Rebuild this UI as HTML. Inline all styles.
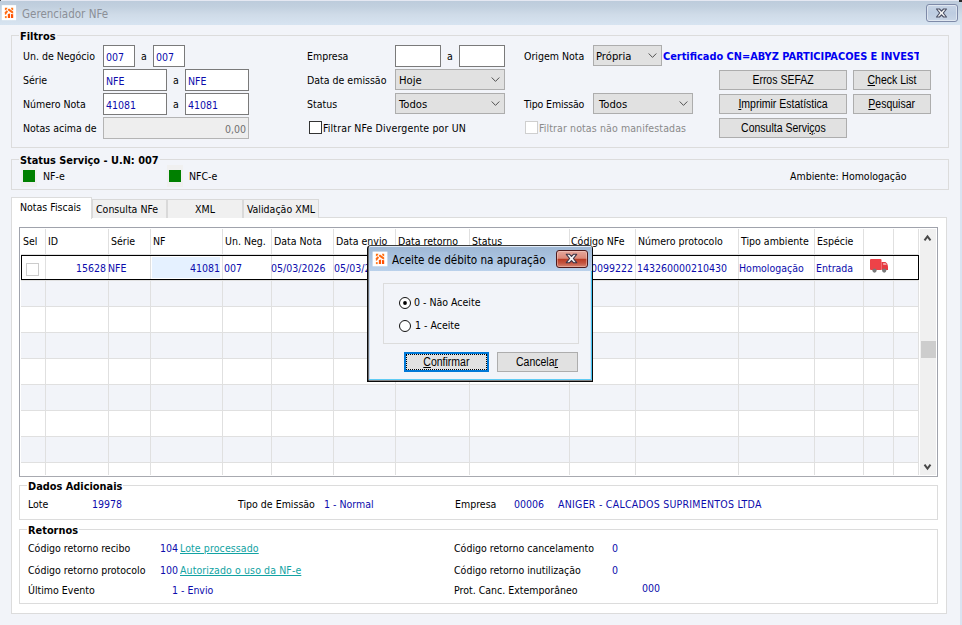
<!DOCTYPE html>
<html lang="pt-BR">
<head>
<meta charset="utf-8">
<title>Gerenciador NFe</title>
<style>
*{box-sizing:border-box;margin:0;padding:0}
html,body{width:962px;height:625px;overflow:hidden}
body{position:relative;background:#f2f4f9;font-family:"DejaVu Sans Condensed","Liberation Sans",sans-serif;font-size:10.5px;color:#000;line-height:13px}
.a{position:absolute;white-space:nowrap}
.t{position:absolute;white-space:nowrap;height:13px;line-height:13px;margin-top:1px}
.bl{color:#0c0cac}
.b{font-weight:bold;font-size:10.9px}
.titlebar{left:0;top:0;width:962px;height:25px;background:linear-gradient(#bccbdb 0,#c2d0df 28%,#cfdbe8 58%,#d7e4f1 100%)}
.ttl{font-family:"DejaVu Sans Condensed","Liberation Sans",sans-serif;font-size:11.5px;height:16px;line-height:16px}
.fs{border:1px solid #dcdcdc}
.lg{background:#f2f4f9;padding:0 1px;height:13px;line-height:13px}
.inp{background:#fff;border:1px solid #7a7a7a;height:22px;line-height:22px;padding-left:2px;color:#0c0cac}
.cmb{background:#e1e1e1;border:1px solid #adadad;height:21px;line-height:20px;padding-left:3px;padding-top:1px;font-size:11.2px}
.cmb svg{position:absolute;right:4px;top:7px}
.btn{background:#e1e1e1;border:1px solid #adadad;height:20px;line-height:18px;text-align:center;font-family:"Liberation Sans",sans-serif;font-size:12px}
.btn span{display:inline-block;transform:scaleX(.875);transform-origin:50% 50%}
.btn u{text-decoration:underline;text-underline-offset:1px}
.cb{width:13px;height:13px;background:#fff;border:1px solid #333}
.tab{background:#f0f0f0;border:1px solid #d9d9d9;border-bottom:none;height:19px;line-height:19px;text-align:center;top:199px}
.hl{background:#e0e0e0;height:1px}
.vl{background:#e0e0e0;width:1px}
.row{left:21px;width:898px;height:26px}
.g{background:#f2f4f9}
</style>
</head>
<body>

<!-- ===== main window title bar ===== -->
<div class="a titlebar"></div>
<div class="a" style="left:0;top:0;width:962px;height:1px;background:#e5e8f2"></div>
<div class="a" style="left:0;top:0;width:1px;height:1px;background:#4a4a4a"></div>
<div class="a" style="left:959px;top:0;width:3px;height:2px;background:#2a2a2a"></div>
<div class="a" style="left:960px;top:25px;width:2px;height:600px;background:#d9e4f1"></div>
<svg class="a" style="left:1px;top:5px" width="17" height="17" viewBox="0 0 17 17">
  <rect x="0.8" y="0.15" width="14.3" height="15.05" fill="#fff"/>
  <g transform="translate(3.9 2.8)" fill="#ff6a12">
    <path d="M0 0 L2.6 0 L2 1.5 L0 2.6 Z" fill="#ff7418"/>
    <path d="M5.9 0 L8.3 0 L8.3 2.6 L6.6 1.5 Z" fill="#ff7418"/>
    <path d="M2.9 1.7 L4.1 .6 L8.3 3.6 L8.3 5.6 L7.1 5.4 L2.9 2.4 Z"/>
    <path d="M1.6 2.5 L3.2 3.6 L1.1 6.8 L0 7 L0 4.4 Z"/>
    <path d="M2.95 6.1 L5.2 5.6 L5.2 10.1 L2.95 10.1 Z" fill="#ff5808"/>
    <path d="M6.1 6.1 L8.3 6.5 L8.3 10.1 L6.1 10.1 Z" fill="#ff5206"/>
    <path d="M0 8.3 L1.8 8.3 L1.8 10.3 L0 10.3 Z" fill="#ff7a20"/>
  </g>
</svg>
<div class="t ttl" style="left:22px;top:5px;color:#8b8f97">Gerenciador NFe</div>
<div class="a" style="left:926px;top:4px;width:32px;height:18px;border:1px solid #7e8aa8;border-radius:3px;background:linear-gradient(#c7d4e5,#bdcce0 50%,#c9d6e6);box-shadow:inset 0 0 0 1px rgba(255,255,255,.45)"></div>
<svg class="a" style="left:935px;top:8px" width="13" height="10" viewBox="0 0 13 10">
  <path d="M1.5 1 L4.5 1 L6.5 3.2 L8.5 1 L11.5 1 L8.3 5 L11.5 9 L8.5 9 L6.5 6.8 L4.5 9 L1.5 9 L4.7 5 Z" fill="#f6f6f6" stroke="#4a4f64" stroke-width="1.15" stroke-linejoin="round"/>
</svg>

<!-- ===== Filtros ===== -->
<div class="a fs" style="left:11px;top:35px;width:938px;height:113px"></div>
<div class="t b lg" style="left:19px;top:29px">Filtros</div>

<div class="t" style="left:23px;top:49px">Un. de Negócio</div>
<div class="a inp" style="left:103px;top:45px;width:32px">007</div>
<div class="t" style="left:141px;top:49px">a</div>
<div class="a inp" style="left:153px;top:45px;width:32px">007</div>

<div class="t" style="left:23px;top:73px">Série</div>
<div class="a inp" style="left:103px;top:69px;width:64px">NFE</div>
<div class="t" style="left:173px;top:73px">a</div>
<div class="a inp" style="left:185px;top:69px;width:64px">NFE</div>

<div class="t" style="left:23px;top:97px">Número Nota</div>
<div class="a inp" style="left:103px;top:93px;width:64px">41081</div>
<div class="t" style="left:173px;top:97px">a</div>
<div class="a inp" style="left:185px;top:93px;width:64px">41081</div>

<div class="t" style="left:23px;top:121px">Notas acima de</div>
<div class="a inp" style="left:103px;top:117px;width:146px;background:#eeeeee;border-color:#b4b4b4;color:#707070;text-align:right;padding-right:2px">0,00</div>

<div class="t" style="left:307px;top:49px">Empresa</div>
<div class="a inp" style="left:395px;top:45px;width:46px"></div>
<div class="t" style="left:447px;top:49px">a</div>
<div class="a inp" style="left:459px;top:45px;width:46px"></div>

<div class="t" style="left:307px;top:73px">Data de emissão</div>
<div class="a cmb" style="left:395px;top:69px;width:110px">Hoje<svg width="9" height="6" viewBox="0 0 9 6"><path d="M.7 .5 4.5 4.4 8.3 .5" fill="none" stroke="#505050" stroke-width="1"/></svg></div>

<div class="t" style="left:307px;top:97px">Status</div>
<div class="a cmb" style="left:395px;top:93px;width:110px">Todos<svg width="9" height="6" viewBox="0 0 9 6"><path d="M.7 .5 4.5 4.4 8.3 .5" fill="none" stroke="#505050" stroke-width="1"/></svg></div>

<div class="a cb" style="left:309px;top:121px"></div>
<div class="t" style="left:323px;top:121px;letter-spacing:.14px">Filtrar NFe Divergente por UN</div>

<div class="t" style="left:524px;top:49px">Origem Nota</div>
<div class="a cmb" style="left:593px;top:45px;width:69px;line-height:20px;padding-left:2px">Própria<svg width="9" height="6" viewBox="0 0 9 6"><path d="M.7 .5 4.5 4.4 8.3 .5" fill="none" stroke="#505050" stroke-width="1"/></svg></div>
<div class="t b" style="left:663px;top:49px;width:256px;overflow:hidden;color:#0000f0">Certificado CN=ABYZ PARTICIPACOES E INVESTIMENTOS</div>

<div class="t" style="left:524px;top:97px;letter-spacing:-.15px">Tipo Emissão</div>
<div class="a cmb" style="left:593px;top:93px;width:100px;padding-left:5px">Todos<svg width="9" height="6" viewBox="0 0 9 6"><path d="M.7 .5 4.5 4.4 8.3 .5" fill="none" stroke="#505050" stroke-width="1"/></svg></div>

<div class="a cb" style="left:525px;top:121px;border-color:#cfcfcf"></div>
<div class="t" style="left:539px;top:121px;color:#8a8a8a;letter-spacing:.11px">Filtrar notas não manifestadas</div>

<div class="a btn" style="left:719px;top:70px;width:128px"><span>Erros SEFAZ</span></div>
<div class="a btn" style="left:853px;top:70px;width:78px"><span><u>C</u>heck List</span></div>
<div class="a btn" style="left:719px;top:94px;width:128px"><span><u>I</u>mprimir Estatística</span></div>
<div class="a btn" style="left:853px;top:94px;width:78px"><span><u>P</u>esquisar</span></div>
<div class="a btn" style="left:719px;top:118px;width:128px"><span>Consulta Servi<u>ç</u>os</span></div>

<!-- ===== Status Serviço ===== -->
<div class="a fs" style="left:11px;top:159px;width:938px;height:31px"></div>
<div class="t b lg" style="left:19px;top:153px">Status Serviço - U.N: 007</div>
<div class="a" style="left:21px;top:165px;width:16px;height:22px;background:#f0f0f0"></div>
<div class="a" style="left:23px;top:170px;width:12px;height:12px;background:#008000"></div>
<div class="t" style="left:43px;top:169px">NF-e</div>
<div class="a" style="left:167px;top:165px;width:16px;height:22px;background:#f0f0f0"></div>
<div class="a" style="left:169px;top:170px;width:12px;height:12px;background:#008000"></div>
<div class="t" style="left:189px;top:169px">NFC-e</div>
<div class="t" style="left:790px;top:169px">Ambiente: Homologação</div>

<!-- ===== Tabs ===== -->
<div class="a" style="left:11px;top:217px;width:936px;height:397px;background:#fff;border:1px solid #dcdcdc"></div>
<div class="a tab" style="left:92px;width:75px;text-align:left;padding-left:3px">Consulta NFe</div>
<div class="a tab" style="left:167px;width:76px">XML</div>
<div class="a tab" style="left:243px;width:76px">Validação XML</div>
<div class="a" style="left:11px;top:197px;width:81px;height:22px;background:#fff;border:1px solid #dcdcdc;border-bottom:none;line-height:19px;padding-left:8px">Notas Fiscais</div>

<!-- ===== Grid ===== -->
<div class="a" style="left:19px;top:227px;width:919px;height:250px;background:#fff;border:1px solid #a0a3ac;border-bottom-color:#a8aab0"></div>
<!-- alternating rows -->
<div class="a row g" style="top:281px"></div>
<div class="a row g" style="top:333px"></div>
<div class="a row g" style="top:385px"></div>
<div class="a row g" style="top:437px"></div>
<!-- horizontal lines -->
<div class="a hl" style="left:21px;top:254px;width:898px"></div>
<div class="a hl" style="left:21px;top:280px;width:898px"></div>
<div class="a hl" style="left:21px;top:306px;width:898px"></div>
<div class="a hl" style="left:21px;top:332px;width:898px"></div>
<div class="a hl" style="left:21px;top:358px;width:898px"></div>
<div class="a hl" style="left:21px;top:384px;width:898px"></div>
<div class="a hl" style="left:21px;top:410px;width:898px"></div>
<div class="a hl" style="left:21px;top:436px;width:898px"></div>
<div class="a hl" style="left:21px;top:462px;width:898px"></div>
<!-- vertical lines -->
<div class="a vl" style="left:45px;top:229px;height:246px"></div>
<div class="a vl" style="left:108px;top:229px;height:246px"></div>
<div class="a vl" style="left:150px;top:229px;height:246px"></div>
<div class="a vl" style="left:222px;top:229px;height:246px"></div>
<div class="a vl" style="left:271px;top:229px;height:246px"></div>
<div class="a vl" style="left:333px;top:229px;height:246px"></div>
<div class="a vl" style="left:395px;top:229px;height:246px"></div>
<div class="a vl" style="left:469px;top:229px;height:246px"></div>
<div class="a vl" style="left:569px;top:229px;height:246px"></div>
<div class="a vl" style="left:635px;top:229px;height:246px"></div>
<div class="a vl" style="left:738px;top:229px;height:246px"></div>
<div class="a vl" style="left:814px;top:229px;height:246px"></div>
<div class="a vl" style="left:863px;top:229px;height:246px"></div>
<div class="a vl" style="left:893px;top:229px;height:246px"></div>
<div class="a vl" style="left:918px;top:229px;height:246px"></div>
<!-- header -->
<div class="t" style="left:23px;top:234px">Sel</div>
<div class="t" style="left:48px;top:234px">ID</div>
<div class="t" style="left:111px;top:234px">Série</div>
<div class="t" style="left:153px;top:234px">NF</div>
<div class="t" style="left:225px;top:234px">Un. Neg.</div>
<div class="t" style="left:274px;top:234px">Data Nota</div>
<div class="t" style="left:336px;top:234px">Data envio</div>
<div class="t" style="left:398px;top:234px">Data retorno</div>
<div class="t" style="left:472px;top:234px">Status</div>
<div class="t" style="left:571px;top:234px">Código NFe</div>
<div class="t" style="left:638px;top:234px">Número protocolo</div>
<div class="t" style="left:741px;top:234px">Tipo ambiente</div>
<div class="t" style="left:817px;top:234px">Espécie</div>
<!-- selected row -->
<div class="a" style="left:152px;top:257px;width:68px;height:21px;background:#e5f1ff"></div>
<div class="a" style="left:21px;top:255px;width:898px;height:25px;border:1px solid #000;border-width:1.5px 1px 1.5px 1.5px"></div>
<div class="a" style="left:26px;top:263px;width:13px;height:13px;background:#fff;border:1px solid #cccccc"></div>
<div class="t bl" style="left:46px;top:261px;width:60px;text-align:right">15628</div>
<div class="t bl" style="left:108px;top:261px">NFE</div>
<div class="t bl" style="left:152px;top:261px;width:68px;text-align:right">41081</div>
<div class="t bl" style="left:224px;top:261px">007</div>
<div class="t bl" style="left:271px;top:261px">05/03/2026</div>
<div class="t bl" style="left:334px;top:261px">05/03/2026</div>
<div class="t bl" style="left:570px;top:261px;width:63px;text-align:right">0099222</div>
<div class="t bl" style="left:637px;top:261px">143260000210430</div>
<div class="t bl" style="left:739px;top:261px">Homologação</div>
<div class="t bl" style="left:816px;top:261px">Entrada</div>
<svg class="a" style="left:869px;top:258px" width="20" height="16" viewBox="0 0 20 16">
  <rect x="1" y="1" width="11.5" height="11" rx="1" fill="#ee4248"/>
  <path d="M12.5 4 L16.5 4 Q18.8 5 19 8.5 L19 12 L12.5 12 Z" fill="#e63a40"/>
  <path d="M14.2 5 L16.3 5 Q17.4 5.6 17.6 7 L14.2 7 Z" fill="#f3a0a3"/>
  <circle cx="5.5" cy="12.6" r="2.1" fill="#7a7a7a"/>
  <circle cx="15.2" cy="12.6" r="2.1" fill="#7a7a7a"/>
</svg>
<!-- scrollbar -->
<div class="a" style="left:920px;top:229px;width:16px;height:246px;background:#f0f0f0"></div>
<div class="a" style="left:921px;top:341px;width:15px;height:17px;background:#cdcdcd"></div>
<svg class="a" style="left:923px;top:233px" width="9" height="9" viewBox="0 0 9 9"><path d="M1.5 7.3 4.5 3.4 7.5 7.3" fill="none" stroke="#484848" stroke-width="2"/></svg>
<svg class="a" style="left:923px;top:463px" width="9" height="9" viewBox="0 0 9 9"><path d="M1.5 1.7 4.5 5.6 7.5 1.7" fill="none" stroke="#484848" stroke-width="2"/></svg>

<!-- ===== Dados Adicionais ===== -->
<div class="a fs" style="left:19px;top:485px;width:919px;height:35px"></div>
<div class="t b" style="left:27px;top:479px;background:#fff;padding:0 1px">Dados Adicionais</div>
<div class="t" style="left:28px;top:497px">Lote</div>
<div class="t bl" style="left:92px;top:497px">19978</div>
<div class="t" style="left:238px;top:497px">Tipo de Emissão</div>
<div class="t bl" style="left:324px;top:497px">1 - Normal</div>
<div class="t" style="left:455px;top:497px">Empresa</div>
<div class="t bl" style="left:514px;top:497px">00006</div>
<div class="t bl" style="left:558px;top:497px;letter-spacing:.25px">ANIGER - CALCADOS SUPRIMENTOS LTDA</div>

<!-- ===== Retornos ===== -->
<div class="a fs" style="left:19px;top:529px;width:919px;height:75px"></div>
<div class="t b" style="left:27px;top:523px;background:#fff;padding:0 1px">Retornos</div>
<div class="t" style="left:28px;top:541px">Código retorno recibo</div>
<div class="t bl" style="left:160px;top:541px">104</div>
<div class="t" style="left:180px;top:541px;color:#12a3a3;text-decoration:underline;letter-spacing:.1px">Lote processado</div>
<div class="t" style="left:28px;top:563px">Código retorno protocolo</div>
<div class="t bl" style="left:160px;top:563px">100</div>
<div class="t" style="left:180px;top:563px;color:#12a3a3;text-decoration:underline;letter-spacing:.1px">Autorizado o uso da NF-e</div>
<div class="t" style="left:28px;top:583px">Último Evento</div>
<div class="t bl" style="left:172px;top:583px">1 - Envio</div>
<div class="t" style="left:454px;top:541px">Código retorno cancelamento</div>
<div class="t bl" style="left:612px;top:541px">0</div>
<div class="t" style="left:454px;top:563px">Código retorno inutilização</div>
<div class="t bl" style="left:612px;top:563px">0</div>
<div class="t" style="left:454px;top:583px">Prot. Canc. Extemporâneo</div>
<div class="t bl" style="left:642px;top:581px">000</div>

<!-- ===== Dialog ===== -->
<div class="a" style="left:367px;top:245px;width:226px;height:137px;background:#f2f4f9;border:1px solid #0a0a0a;border-top-color:#3c3c3c;border-radius:4px 4px 0 0"></div>
<div class="a" style="left:368px;top:246px;width:1px;height:135px;background:rgba(0,0,0,.55)"></div>
<div class="a" style="left:368px;top:380px;width:224px;height:1px;background:rgba(0,0,0,.45)"></div>
<div class="a" style="left:369px;top:246px;width:223px;height:25px;border-radius:3px 2px 0 0;background:linear-gradient(#e2ecf8 0,#e2ecf8 1px,#9fb8d5 1px,#a6bfdc 35%,#bad1eb 100%)"></div>
<div class="a" style="left:369px;top:271px;width:1px;height:109px;background:#c6d8ef"></div>
<div class="a" style="left:591px;top:271px;width:1px;height:109px;background:#46c6f3"></div>
<div class="a" style="left:590px;top:271px;width:1px;height:108px;background:#d5e0f3"></div>
<div class="a" style="left:369px;top:379px;width:223px;height:1px;background:#5fcbf4"></div>
<svg class="a" style="left:372px;top:251px" width="17" height="17" viewBox="0 0 17 17">
  <rect x="0.6" y="0.6" width="14.8" height="14.7" fill="#fff"/>
  <g transform="translate(3.9 2.8)" fill="#ff6a12">
    <path d="M0 0 L2.6 0 L2 1.5 L0 2.6 Z" fill="#ff7418"/>
    <path d="M5.9 0 L8.3 0 L8.3 2.6 L6.6 1.5 Z" fill="#ff7418"/>
    <path d="M2.9 1.7 L4.1 .6 L8.3 3.6 L8.3 5.6 L7.1 5.4 L2.9 2.4 Z"/>
    <path d="M1.6 2.5 L3.2 3.6 L1.1 6.8 L0 7 L0 4.4 Z"/>
    <path d="M2.95 6.1 L5.2 5.6 L5.2 10.1 L2.95 10.1 Z" fill="#ff5808"/>
    <path d="M6.1 6.1 L8.3 6.5 L8.3 10.1 L6.1 10.1 Z" fill="#ff5206"/>
    <path d="M0 8.3 L1.8 8.3 L1.8 10.3 L0 10.3 Z" fill="#ff7a20"/>
  </g>
</svg>
<div class="t ttl" style="left:392px;top:251px;font-size:11.6px">Aceite de débito na apuração</div>
<div class="a" style="left:556px;top:250px;width:32px;height:18px;border:1px solid #4e1a1c;border-radius:3px;background:linear-gradient(#e6a89d 0,#dc8878 46%,#b93b24 50%,#c4543f 75%,#d48573 100%);box-shadow:inset 0 0 0 1px rgba(255,225,215,.4)"></div>
<svg class="a" style="left:565px;top:253px" width="13" height="11" viewBox="0 0 13 11">
  <path d="M1.3 1.3 L4.6 1.3 L6.5 3.4 L8.4 1.3 L11.7 1.3 L8.4 5.5 L11.7 9.7 L8.4 9.7 L6.5 7.6 L4.6 9.7 L1.3 9.7 L4.6 5.5 Z" fill="#f4f4f4" stroke="#3c3446" stroke-width="1.1" stroke-linejoin="round"/>
</svg>
<div class="a fs" style="left:383px;top:283px;width:196px;height:61px"></div>
<svg class="a" style="left:398px;top:296px" width="14" height="14" viewBox="0 0 14 14"><circle cx="7" cy="7" r="5.5" fill="#fff" stroke="#111" stroke-width="1"/><circle cx="7" cy="7" r="1.9" fill="#000"/></svg>
<div class="t" style="left:414px;top:295px">0 - Não Aceite</div>
<svg class="a" style="left:398px;top:319px" width="14" height="14" viewBox="0 0 14 14"><circle cx="7" cy="7" r="5.5" fill="#fff" stroke="#111" stroke-width="1"/></svg>
<div class="t" style="left:415px;top:318px">1 - Aceite</div>
<div class="a btn" style="left:404px;top:352px;width:85px;height:20px;border:2px solid #0078d7;line-height:16px"><span><u>C</u>onfirmar</span></div>
<div class="a" style="left:406px;top:354px;width:81px;height:16px;border:1px dotted #000"></div>
<div class="a btn" style="left:497px;top:352px;width:81px;height:20px;line-height:18px"><span>Cancela<u>r</u></span></div>

</body>
</html>
